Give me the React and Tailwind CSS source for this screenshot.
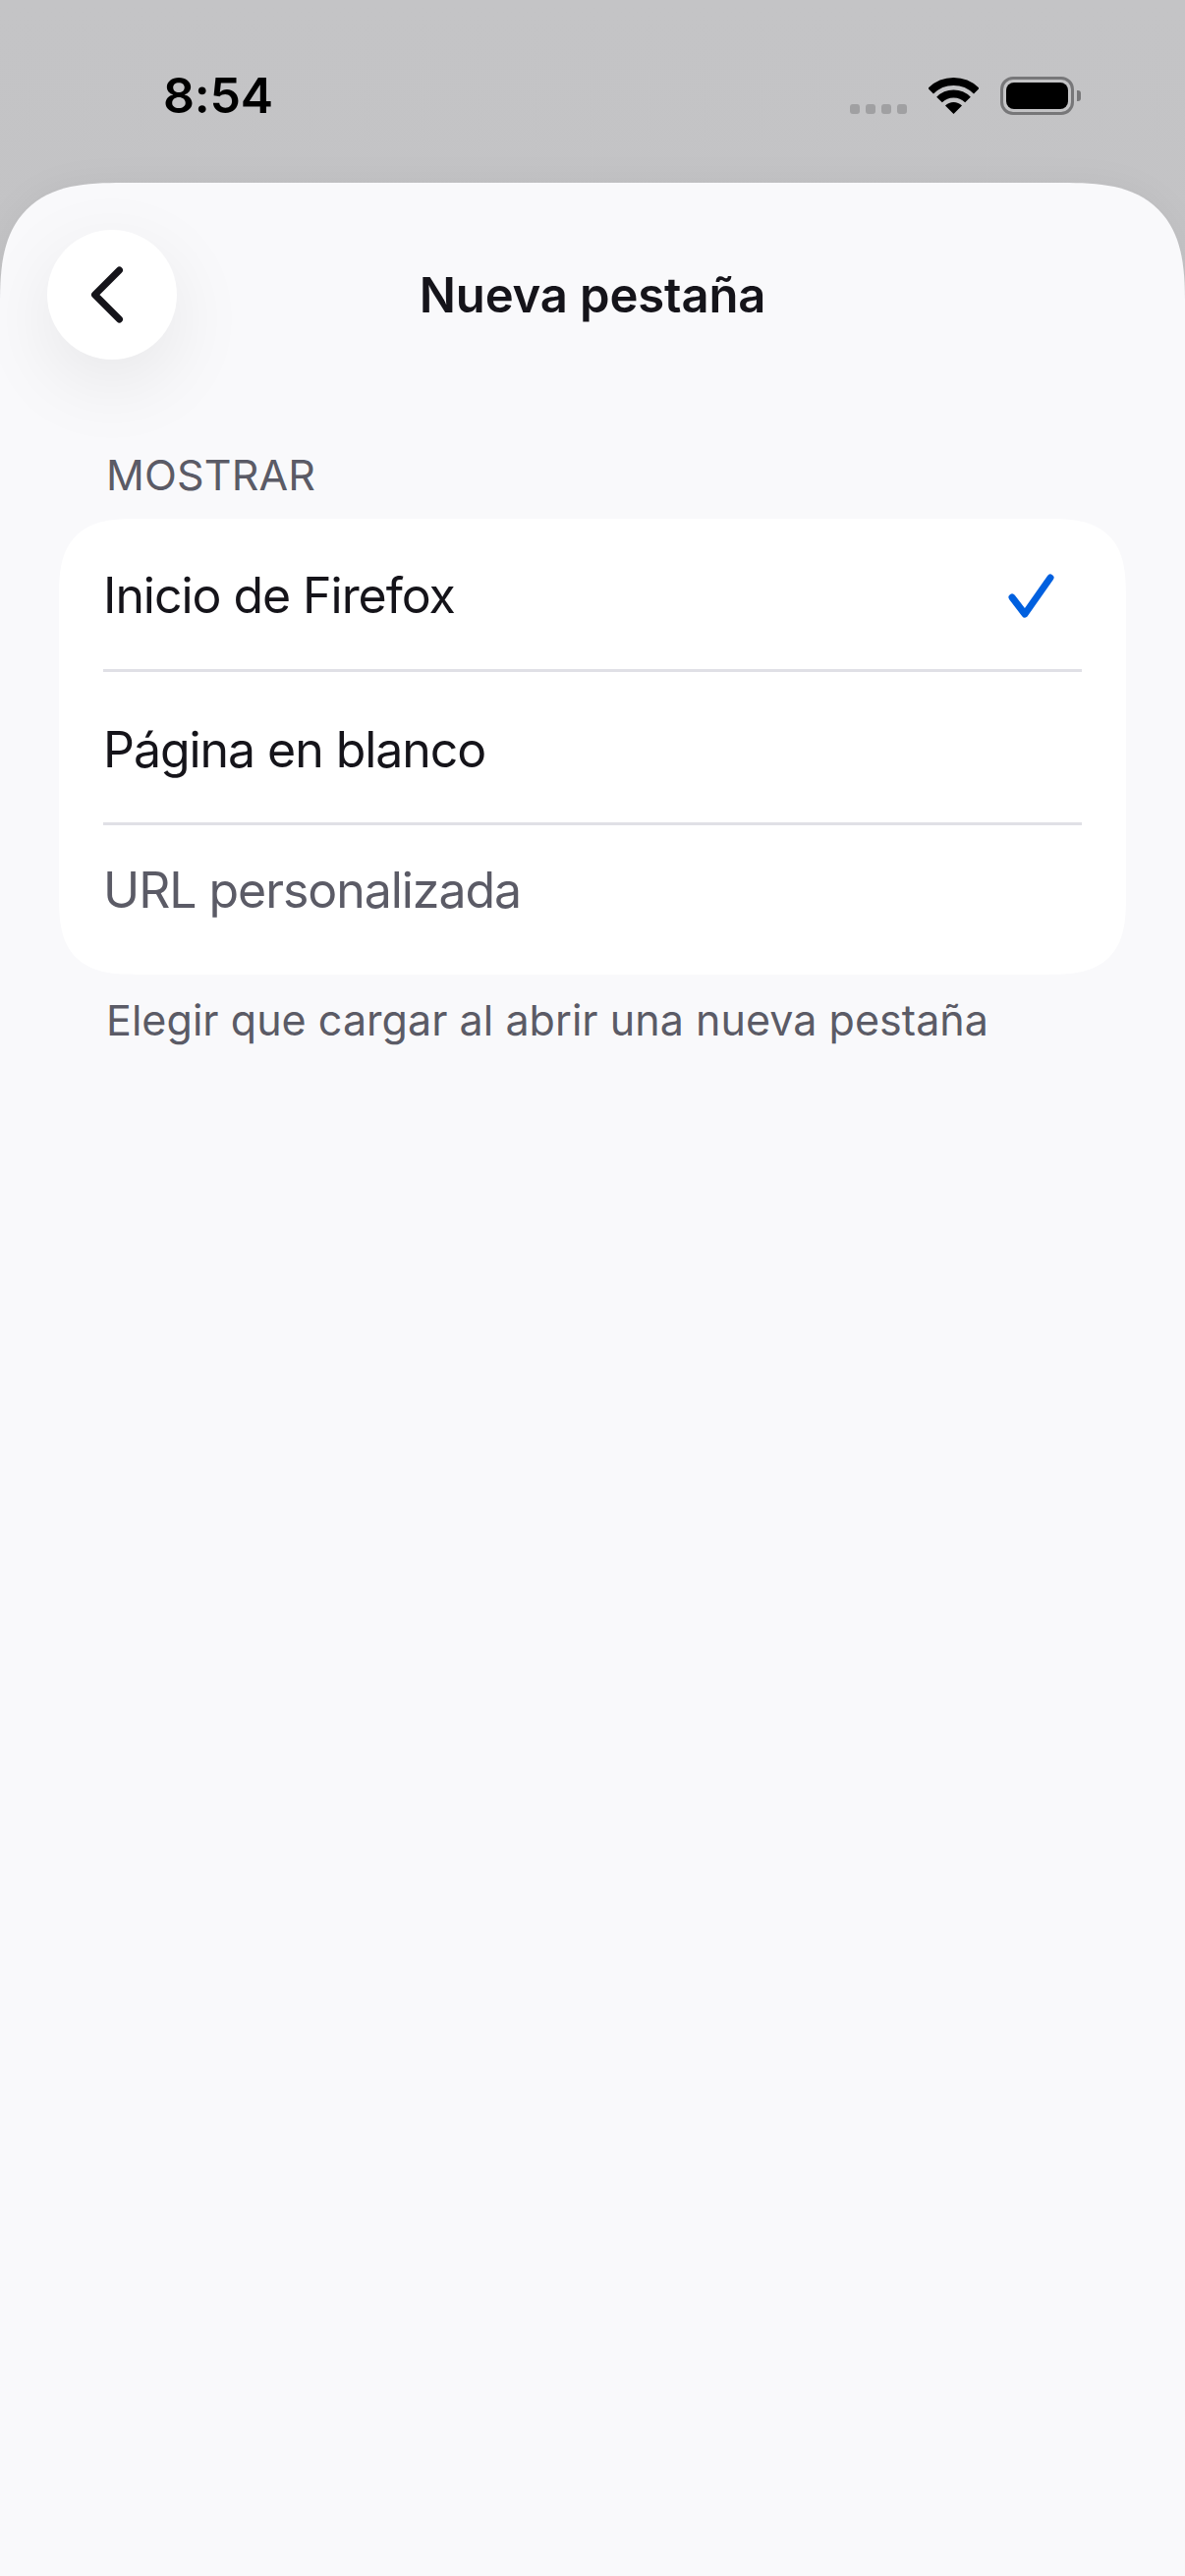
import React from "react";

const Row = ({ label, className = "", children }) => (
  <div className={`flex items-center justify-between pl-[45px] pr-[45px] ${className}`}>
    {label}
    {children}
  </div>
);

const App = () => {
  return (
    <div className="flex h-[2622px] w-[1206px] flex-col overflow-hidden bg-gradient-to-b from-[#c4c4c6] to-[#bcbcbe] font-['Inter',sans-serif]">
      {/* status bar */}
      <div className="flex h-[186px] shrink-0 items-start justify-between pl-[166px] pr-[106px] pt-[78px]">
        <span className="text-[50px] font-semibold leading-[39px] tracking-[-0.2px] text-black">8:54</span>
        <div className="flex h-[39px] items-end">
          <div className="mb-[1px] flex gap-[6px]">
            <div className="h-[10px] w-[10px] rounded-[3px] bg-[#a0a0a2]" />
            <div className="h-[10px] w-[10px] rounded-[3px] bg-[#a0a0a2]" />
            <div className="h-[10px] w-[10px] rounded-[3px] bg-[#a0a0a2]" />
            <div className="h-[10px] w-[10px] rounded-[3px] bg-[#a0a0a2]" />
          </div>
          <svg className="mb-[1px] ml-[22px]" width="51" height="37" viewBox="0 0 51 37">
            <path d="M25.5 37 L17 28.5 A12 12 0 0 1 34 28.5 Z" fill="#000" />
            <path d="M11 22.5 A20.5 20.5 0 0 1 40 22.5" fill="none" stroke="#000" strokeWidth="8" />
            <path d="M2.17 13.67 A33 33 0 0 1 48.83 13.67" fill="none" stroke="#000" strokeWidth="8" />
          </svg>
          <div className="ml-[22px] flex items-center">
            <div className="flex h-[39px] w-[75px] rounded-[13px] border-[3px] border-[#777779] p-[3px]">
              <div className="flex-1 rounded-[8px] bg-black" />
            </div>
            <div className="ml-[3px] h-[11px] w-[4px] rounded-r-[3px] bg-[#777779]" />
          </div>
        </div>
      </div>

      {/* sheet */}
      <div className="flex flex-1 flex-col rounded-t-[125px] bg-[#f9f9fb] shadow-[0_0_40px_rgba(0,0,0,0.04)] [corner-shape:superellipse(1.5)]">
        <div className="flex items-center pl-[48px] pr-[48px] pt-[48px]">
          <button className="flex h-[132px] w-[132px] shrink-0 items-center justify-center rounded-full bg-white shadow-[0_24px_80px_rgba(0,0,0,0.08)]">
            <svg className="mr-[6px]" width="38" height="60" viewBox="0 0 38 60">
              <path d="M29.5 5 L4.5 30 L29.5 55" fill="none" stroke="#15141a" strokeWidth="7" strokeLinecap="round" strokeLinejoin="round" />
            </svg>
          </button>
          <h1 className="flex-1 pt-[2px] text-center text-[49px] font-semibold tracking-[-0.15px] text-[#15141a]">Nueva pestaña</h1>
          <div className="h-[132px] w-[132px] shrink-0" />
        </div>

        <p className="ml-[108px] mt-[91px] text-[43px] leading-[52px] tracking-[0.15px] text-[#5b5b66]">MOSTRAR</p>

        <div className="ml-[60px] mr-[60px] mt-[19px] rounded-[80px] bg-white text-[50px] tracking-[-1.05px] text-[#15141a] [corner-shape:superellipse(1.5)]">
          <Row label="Inicio de Firefox" className="h-[153px] pt-[4px]">
            <svg className="mr-[28px] mt-[3px]" width="48" height="48" viewBox="0 0 48 48">
              <path d="M5 24 L18 41 L44 4" fill="none" stroke="#0060df" strokeWidth="7" strokeLinecap="round" strokeLinejoin="round" />
            </svg>
          </Row>
          <div className="mx-[45px] h-[3px] bg-[#e0e0e6]" />
          <Row label="Página en blanco" className="h-[153px] pt-[6px]" />
          <div className="mx-[45px] h-[3px] bg-[#e0e0e6]" />
          <Row label="URL personalizada" className="h-[152px] pb-[20px] text-[#5b5b66]" />
        </div>

        <p className="ml-[108px] mt-[20px] text-[43px] leading-[52px] tracking-[0.05px] text-[#5b5b66]">Elegir que cargar al abrir una nueva pestaña</p>
      </div>
    </div>
  );
};

export default App;
